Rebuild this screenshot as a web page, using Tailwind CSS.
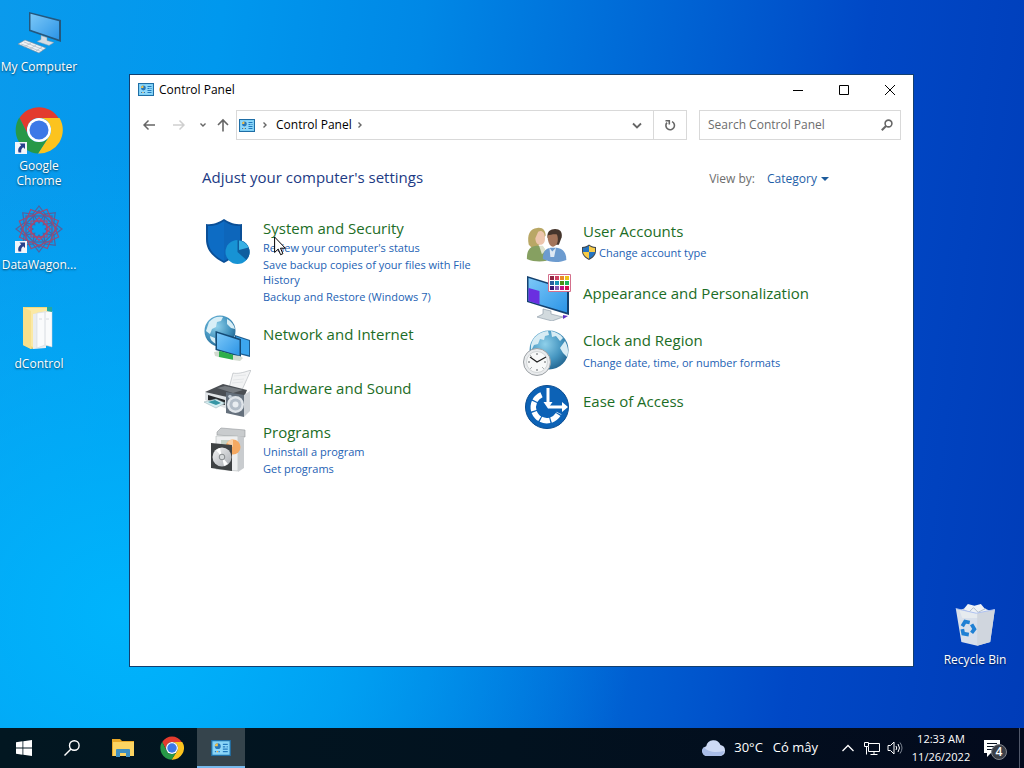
<!DOCTYPE html>
<html lang="en">
<head>
    <meta charset="UTF-8">
    <meta name="viewport" content="width=device-width, initial-scale=1.0">
    <title>Control Panel</title>
    <script src="https://cdn.jsdelivr.net/npm/@tailwindcss/browser@4"></script>
</head>
<body class="min-h-screen flex flex-col overflow-hidden font-['Open_Sans','Noto_Sans',sans-serif] text-xs bg-[radial-gradient(ellipse_50%_60%_at_12%_80%,#00b4fc_0%,#00b4fc00_100%),linear-gradient(97deg,#0a9aec_0%,#0098ee_20%,#0088e6_38%,#0068d6_58%,#0048c6_78%,#003cb8_100%)]">

    <!-- Shared icons -->
    <svg class="absolute size-0" aria-hidden="true">
        <defs>
            <linearGradient id="screenBlue" x1="0" y1="0" x2="1" y2="1">
                <stop offset="0" stop-color="#7cc8f8" />
                <stop offset="1" stop-color="#2b94e6" />
            </linearGradient>
            <radialGradient id="globeBlue" cx=".4" cy=".35" r=".7">
                <stop offset="0" stop-color="#8fd0ea" />
                <stop offset=".6" stop-color="#4595c0" />
                <stop offset="1" stop-color="#22648f" />
            </radialGradient>
            <linearGradient id="metal" x1="0" y1="0" x2="1" y2="1">
                <stop offset="0" stop-color="#f4f4f4" />
                <stop offset="1" stop-color="#a9adb3" />
            </linearGradient>
        </defs>
        <symbol id="panel" viewBox="0 0 16 13">
            <rect x=".5" y=".5" width="15" height="12" fill="#7fd0f5" stroke="#1f6ea6" />
            <rect x="2" y="2" width="12" height="9" fill="#8fd8fa" />
            <circle cx="5.4" cy="5" r="2.4" fill="#2877b8" />
            <path d="M5.4 5V2.6A2.4 2.4 0 0 0 3 5z" fill="#f2c14a" />
            <path d="M9.500 3.500h4M9.500 5.500h2M12.500 5.500h1M9.500 7.500h4M9.500 9.500h4M3 9.500h1M6 9.500h1" stroke="#2079bd" />
            <path d="M4.500 9.500h1" stroke="#f2a23a" />
        </symbol>
        <symbol id="chrome" viewBox="0 0 48 48">
            <path d="M24 12H43.500A23 23 0 0 0 4.500 12L13.600 30A12 12 0 0 1 24 12z" fill="#e33b2e" />
            <path d="M24 12H44.500A23.500 23.500 0 0 1 23 47.500L34.400 30A12 12 0 0 0 24 12z" fill="#fcc31e" />
            <path d="M4.300 11.500A23.500 23.500 0 0 0 23 47.500L34.400 30A12 12 0 0 1 13.600 30z" fill="#279847" />
            <circle cx="24" cy="24" r="12" fill="#fff" />
            <circle cx="24" cy="24" r="9.500" fill="#3b78e7" />
        </symbol>
        <symbol id="shortcut" viewBox="0 0 12 12">
            <path d="M0 0h12v12H0z" fill="#f2f5fa" />
            <path d="M4.500 1.500H10V7L8.200 5.300C6.500 6.500 6 8 6.200 10.500H3.500C2.500 7.500 3.800 5 6.200 3.300z" fill="#27418c" />
        </symbol>
        <symbol id="chevron" viewBox="0 0 8 8">
            <path d="M2.500 1.500L5 4 2.500 6.500" fill="none" stroke="#666" stroke-width="1.400" />
        </symbol>
    </svg>

    <main class="flex-1 flex">

        <!-- Desktop icons, left -->
        <ul class="w-[129px] shrink-0 pt-[7px] text-white text-center leading-[15px] [text-shadow:0_1px_2px_rgb(0_0_0/0.6)]">
            <li class="w-[78px] h-[99px]">
                <svg class="mx-auto size-12" viewBox="0 0 48 48">
                    <path d="M14 5l32 8v22L14 24z" fill="#24577d" />
                    <path d="M15.500 6.800L44 14.200v18.300L15.500 22.700z" fill="url(#screenBlue)" />
                    <path d="M26 28.500l6 2v3l7 2-5 3-12-4 4-2z" fill="#d5dde4" stroke="#8298a8" stroke-width=".5" />
                    <path d="M3 37l7-4 21 8-7 5z" fill="#eef2f5" stroke="#74899a" stroke-width=".6" />
                    <path d="M6 37l20 7.500M9 35l19 7.500M9 40l7-4M15 42l6-4M21 44l6-4" stroke="#a9b8c4" stroke-width=".7" />
                </svg>
                <span class="block mt-1 whitespace-nowrap">My Computer</span>
            </li>
            <li class="w-[78px] h-[99px]">
                <div class="relative mx-auto size-12">
                    <svg class="size-12"><use href="#chrome" /></svg>
                    <svg class="absolute left-0 bottom-0 size-3"><use href="#shortcut" /></svg>
                </div>
                <span class="block mt-1">Google<br>Chrome</span>
            </li>
            <li class="w-[78px] h-[99px]">
                <div class="relative mx-auto size-12">
                    <svg class="size-12" viewBox="0 0 48 48" fill="none" stroke="#55609c" stroke-width="1.200">
                        <g id="petals">
                            <path d="M24 1l6 8-6 9-6-9zM24 47l6-8-6-9-6 9zM1 24l8-6 9 6-9 6zM47 24l-8-6-9 6 9 6z" />
                            <rect x="11" y="11" width="26" height="26" />
                            <rect x="16" y="16" width="16" height="16" stroke="#b5466e" />
                        </g>
                        <use href="#petals" transform="rotate(45 24 24)" />
                        <g stroke="#a04a72">
                            <rect x="9" y="9" width="30" height="30" transform="rotate(22 24 24)" />
                            <rect x="9" y="9" width="30" height="30" transform="rotate(67 24 24)" />
                        </g>
                        <circle cx="24" cy="24" r="8" stroke="#a04a72" />
                    </svg>
                    <svg class="absolute left-0 bottom-0 size-3"><use href="#shortcut" /></svg>
                </div>
                <span class="block mt-1 whitespace-nowrap">DataWagon...</span>
            </li>
            <li class="w-[78px] h-[99px]">
                <svg class="mx-auto size-12" viewBox="0 0 48 48">
                    <path d="M8 3l27 0v38l-19 4L8 41z" fill="#f3d877" />
                    <path d="M10 4h23v4l-15 2v33l-8-3z" fill="#fbe9a4" />
                    <path d="M18 10l13-3v37l-13 1z" fill="#e9edf0" />
                    <path d="M22 9l15-2v36l-7-2-8 3z" fill="#fafbfc" stroke="#ccd3d8" stroke-width=".5" />
                    <path d="M30 8v33M24 15h3M31 15h3" stroke="#cfd5da" stroke-width=".8" />
                    <path d="M32 3h5v5l-5-1z" fill="#25a8a0" />
                    <path d="M8 3l8 4v38l-8-4z" fill="#f8df8b" />
                </svg>
                <span class="block mt-1">dControl</span>
            </li>
        </ul>

        <!-- Control Panel window -->
        <section class="flex-1 min-w-0 mt-[74px] mb-[61px] bg-white border border-[#123f70] text-black">
            <header class="h-[29px] flex items-center">
                <svg class="ml-2 w-4 h-[13px]"><use href="#panel" /></svg>
                <h1 class="ml-[5px] flex-1">Control Panel</h1>
                <button class="w-[46px] h-7 grid place-items-center" aria-label="Minimize">
                    <svg class="size-3" viewBox="0 0 12 12" stroke="#000"><path d="M1 6.500h10" /></svg>
                </button>
                <button class="w-[46px] h-7 grid place-items-center" aria-label="Maximize">
                    <svg class="size-3" viewBox="0 0 12 12" stroke="#000" fill="none"><path d="M1.500 1.500h9v9h-9z" /></svg>
                </button>
                <button class="w-[46px] h-7 grid place-items-center" aria-label="Close">
                    <svg class="size-3" viewBox="0 0 12 12" stroke="#000"><path d="M1 1l10 10M11 1L1 11" /></svg>
                </button>
            </header>

            <!-- Navigation -->
            <nav class="h-[42px] flex items-center pr-3">
                <div class="w-[106px] shrink-0 flex items-center pl-[13px]">
                    <button aria-label="Back">
                        <svg class="size-3" viewBox="0 0 12 12" fill="none" stroke="#666" stroke-width="1.500"><path d="M12 6H1M5.500 1.500L1 6l4.500 4.500" /></svg>
                    </button>
                    <button class="ml-[18px]" aria-label="Forward">
                        <svg class="size-3" viewBox="0 0 12 12" fill="none" stroke="#cfcfcf" stroke-width="1.500"><path d="M0 6h11M6.500 1.500L11 6l-4.500 4.500" /></svg>
                    </button>
                    <button class="ml-3.5" aria-label="Recent locations">
                        <svg class="size-2 rotate-90"><use href="#chevron" /></svg>
                    </button>
                    <button class="ml-2.5" aria-label="Up">
                        <svg class="w-3 h-[14px]" viewBox="0 0 12 14" fill="none" stroke="#666" stroke-width="1.600"><path d="M6 13.500V2M1 7l5-5 5 5" /></svg>
                    </button>
                </div>
                <div class="flex-1 h-[30px] flex items-center border border-[#d9d9d9]">
                    <svg class="ml-0.5 w-4 h-[13px]"><use href="#panel" /></svg>
                    <svg class="ml-1.5 size-2"><use href="#chevron" /></svg>
                    <a href="#" class="ml-[7px]">Control Panel</a>
                    <svg class="ml-1 size-2"><use href="#chevron" /></svg>
                    <button class="ml-auto w-8 h-full grid place-items-center" aria-label="Previous locations">
                        <svg class="size-3" viewBox="0 0 12 12" fill="none" stroke="#666" stroke-width="1.800"><path d="M2 4.500l4 4 4-4" /></svg>
                    </button>
                    <button class="w-[33px] h-full grid place-items-center border-l border-[#d9d9d9]" aria-label="Refresh">
                        <svg class="size-3" viewBox="0 0 12 12" fill="none" stroke="#666" stroke-width="1.600"><path d="M8 2.600A4.300 4.300 0 1 1 3 3.600M1.500 1.800H5.300V5.500" /></svg>
                    </button>
                </div>
                <label class="ml-3 w-[202px] h-[30px] flex items-center border border-[#d9d9d9] pl-2 pr-[7px]">
                    <input type="text" aria-label="Search Control Panel" placeholder="Search Control Panel" class="flex-1 min-w-0 outline-none placeholder:text-[#6d6d6d]">
                    <svg class="size-3" viewBox="0 0 12 12" fill="none" stroke="#666" stroke-width="1.600"><circle cx="7.500" cy="4.500" r="3.400" /><path d="M5 7L.8 11.200" stroke-width="2" /></svg>
                </label>
            </nav>

            <div class="pl-[72px] pr-[84px] pt-[19px]">
                <div class="flex items-baseline">
                    <h2 class="flex-1 text-[15px] leading-6 text-[#1c3a84]">Adjust your computer's settings</h2>
                    <label for="view" class="text-[#6d6d6d]">View by:</label>
                    <div class="relative ml-3 flex items-center text-[#1f5fa8]">
                        <select id="view" class="appearance-none w-[62px] outline-none">
                            <option>Category</option>
                        </select>
                        <svg class="absolute right-0 w-2 h-1 pointer-events-none" viewBox="0 0 8 4"><path d="M0 0h8L4 4z" fill="#1d5c9c" /></svg>
                    </div>
                </div>

                <div class="flex ml-px mt-[29px] text-[11px] leading-[15px] text-[#2462b4]">

                    <!-- Left column -->
                    <div class="w-[320px] shrink-0">
                        <div class="relative flex gap-3">
                            <svg class="size-12 shrink-0" viewBox="0 0 48 48">
                                <path d="M3 6C11 7 16 4 21 1c5 3 10 6 18 5v15c0 12-8 19-18 24C11 40 3 33 3 21z" fill="#0a4f97" />
                                <path d="M5 8c7 0 12-2 16-5v40C11 38 5 31 5 21z" fill="#0d6cc4" />
                                <path d="M21 3c4 3 9 5 16 5v13c0 11-7 17-16 22z" fill="#0d66bb" />
                                <circle cx="34.500" cy="34" r="12" fill="#1793d4" />
                                <path d="M34.500 34V22a12 12 0 0 1 9 20z" fill="#0f5e9f" />
                                <path d="M36 32V22.500a12 12 0 0 1 9.500 7z" fill="#37b0e4" />
                            </svg>
                            <div class="w-[220px]">
                                <a href="#" class="block text-[15px] leading-5 text-[#1c6d26]">System and Security</a>
                                <a href="#" class="block mt-0.5">Review your computer's status</a>
                                <a href="#" class="block mt-0.5">Save backup copies of your files with File History</a>
                                <a href="#" class="block mt-0.5">Backup and Restore (Windows 7)</a>
                            </div>
                            <!-- Mouse pointer -->
                            <svg class="absolute left-[71px] top-[18px] w-3 h-[20px]" viewBox="0 0 12 20"><path d="M.6 1v15.500l3.600-3.400 2.400 5.600 2.300-1-2.400-5.500h4.800z" fill="#fff" stroke="#000" /></svg>
                        </div>
                        <div class="flex gap-3 mt-2.5">
                            <svg class="size-12 shrink-0" viewBox="0 0 48 48">
                                <circle cx="17" cy="17" r="15.500" fill="url(#globeBlue)" />
                                <path d="M6 8c4-5 9-6 14-5l-2 4-4 1-1 5-4 2-2 5-4-3zM24 5c4 2 7 6 8 10l-4-1-4-4zM7 22l5 2 1 6c-4-2-6-5-6-8z" fill="#d8eef6" />
                                <path d="M32 21l15 5v17l-15-4z" fill="#1d5c8e" />
                                <path d="M33 22.500l13 4.300v14.500l-13-3z" fill="#3ca6ee" />
                                <path d="M12.500 17L38 25v18.500L12.500 36z" fill="#144a75" />
                                <path d="M14 19l22.500 7.200v15.300L14 35z" fill="url(#screenBlue)" />
                                <path d="M13 39l4-2 14 4v5l-15-3z" fill="#2fae4b" />
                                <path d="M11 38l5-1v6l-4-1zM30 41l7 1 3 2-3 3-7-1z" fill="#d2dbd0" />
                            </svg>
                            <a href="#" class="mt-2.5 text-[15px] leading-5 text-[#1c6d26]">Network and Internet</a>
                        </div>
                        <div class="flex gap-3 mt-2">
                            <svg class="size-12 shrink-0" viewBox="0 0 48 48">
                                <path d="M26 18l4-15c4 1 9 0 18-3l-9 20z" fill="#f2f3f4" stroke="#aeb3b8" stroke-width=".6" />
                                <path d="M31 6l12-1M30 10l11-1M29 13l11-1" stroke="#dde0e3" stroke-width=".7" />
                                <path d="M2 22l18-8 24 6-4 10-22 4z" fill="#4a4e53" />
                                <path d="M14 18l8-2 18 4-10 3z" fill="#767b80" />
                                <path d="M2 22l22 5v12L2 30z" fill="#dfe3e6" />
                                <path d="M5 25l17 5v5L5 30z" fill="#26292c" />
                                <path d="M1 32l12-3 9 4-9 5z" fill="#d6eef2" stroke="#91a9ae" stroke-width=".5" />
                                <path d="M5 32l7-2 6 3-5 2z" fill="#3696a5" />
                                <path d="M23 22l18 3v22l-18-4z" fill="#65707c" />
                                <path d="M41 25l6-4v20l-6 6z" fill="#cfd3d7" />
                                <circle cx="32.500" cy="34.500" r="8.500" fill="#dfe4e9" />
                                <circle cx="32.500" cy="34.500" r="6" fill="#b3bdc8" />
                                <circle cx="32.500" cy="34.500" r="3" fill="#e9edf1" />
                                <circle cx="27" cy="26.500" r="1.800" fill="#c2ccd6" />
                            </svg>
                            <a href="#" class="mt-2 text-[15px] leading-5 text-[#1c6d26]">Hardware and Sound</a>
                        </div>
                        <div class="flex gap-3 mt-1">
                            <svg class="size-12 mt-1 shrink-0" viewBox="0 0 48 48">
                                <path d="M14 6l4-4 24 2v7l-28-2z" fill="#c9ccce" stroke="#95999c" stroke-width=".6" />
                                <path d="M13 10h22v35l-22-2z" fill="#eeeff0" stroke="#b4b8bb" stroke-width=".6" />
                                <path d="M35 10l6 1v31l-6 4z" fill="#c9cccf" />
                                <path d="M18 14h9v8h-9z" fill="#c3d0c5" />
                                <circle cx="30" cy="21" r="7.500" fill="#f5a962" />
                                <path d="M30 21V13a8 8 0 0 0-6 4z" fill="#f9cfa4" />
                                <path d="M8 17l21 2v26L8 42z" fill="#3f4244" />
                                <circle cx="19" cy="31" r="9.500" fill="url(#metal)" />
                                <path d="M19 31l-6-7 4-2zM19 31l6 7-4 2z" fill="#fff" />
                                <circle cx="19" cy="31" r="2.800" fill="#d6d9db" stroke="#868a8d" />
                            </svg>
                            <div>
                                <a href="#" class="block text-[15px] leading-5 text-[#1c6d26]">Programs</a>
                                <a href="#" class="block mt-0.5">Uninstall a program</a>
                                <a href="#" class="block mt-0.5">Get programs</a>
                            </div>
                        </div>
                    </div>

                    <!-- Right column -->
                    <div class="flex-1 min-w-0 pt-[3px]">
                        <div class="flex gap-3">
                            <svg class="size-12 shrink-0" viewBox="0 0 48 48">
                                <g transform="translate(2 6) scale(.94)">
                                    <path d="M4 19C2 8 5 2 13 1c6-1 9 3 9 8l-3 4-6 9-5 1z" fill="#b9a765" />
                                    <path d="M14 5c4-2 7 1 7 5 1 5-1 9-5 9-3 0-5-3-5-7z" fill="#edc5ad" />
                                    <path d="M2 34c0-8 2-13 10-14 6-1 10 3 11 8v8c-7 1-14 1-21-2z" fill="#86a061" />
                                    <path d="M15 20h4l3 5-4 4z" fill="#dfe3cf" />
                                    <path d="M24 11c-1-6 3-9 8-9s8 3 7 9l-3 8h-8z" fill="#45352c" />
                                    <path d="M24 9c3-1 8-2 10-1 2 5 1 12-4 13-4 0-6-6-6-12z" fill="#a3745a" />
                                    <path d="M19 34c0-7 2-11 8-12h7c7 1 10 6 10 13-7 3-17 3-25-1z" fill="#6c9bcf" />
                                    <path d="M26 22l3 4 4-4-2 10h-4z" fill="#dfe9f4" />
                                </g>
                            </svg>
                            <div>
                                <a href="#" class="block text-[15px] leading-5 text-[#1c6d26]">User Accounts</a>
                                <a href="#" class="flex items-center mt-[3px]">
                                    <svg class="-ml-0.5 mr-0.5 size-4" viewBox="0 0 16 16">
                                        <path d="M1 3c3 0 5-1 7-2.500C10 2 12 3 15 3v4c0 4-3 7-7 9-4-2-7-5-7-9z" fill="#41484f" />
                                        <path d="M8 1.800V8H2V4c2.500 0 4.500-1 6-2.200zM8 8h6c-.5 3-3 5.300-6 6.800z" fill="#2574c0" />
                                        <path d="M8 1.800V8h6V4c-2.500 0-4.500-1-6-2.200zM8 8H2c.5 3 3 5.300 6 6.800z" fill="#f8cc47" />
                                    </svg>
                                    Change account type
                                </a>
                            </div>
                        </div>
                        <div class="flex gap-3 mt-1">
                            <svg class="size-12 shrink-0" viewBox="0 0 48 48">
                                <path d="M4 3l42 13v26L4 29z" fill="#14416f" />
                                <path d="M5.500 5L44 17v22.500L5.500 28z" fill="url(#screenBlue)" />
                                <path d="M5.500 15l11 3v13.500l-11-3.500z" fill="#6a2fe0" />
                                <path d="M20 36l8 2v3l12 3-11 4-15-4 6-3z" fill="#d2dade" stroke="#8796a2" stroke-width=".6" />
                                <path d="M40 42l5 1-5 3z" fill="#6231c5" />
                                <path d="M25.500 1.500h22v17h-22z" fill="#fff" stroke="#d4708c" />
                                <path d="M27 3h4v4h-4z" fill="#8e2541" /><path d="M32 3h4v4h-4z" fill="#cf4161" /><path d="M37 3h4v4h-4z" fill="#e98a28" /><path d="M42 3h4v4h-4z" fill="#ecc018" />
                                <path d="M27 8h4v4h-4z" fill="#27609c" /><path d="M32 8h4v4h-4z" fill="#1794b4" /><path d="M37 8h4v4h-4z" fill="#4a8c14" /><path d="M42 8h4v4h-4z" fill="#17b25c" />
                                <path d="M27 13h4v4h-4z" fill="#3b1c76" /><path d="M32 13h4v4h-4z" fill="#8759b3" /><path d="M37 13h4v4h-4z" fill="#bd1285" /><path d="M42 13h4v4h-4z" fill="#d1104f" />
                            </svg>
                            <a href="#" class="mt-2.5 text-[15px] leading-5 text-[#1c6d26]">Appearance and Personalization</a>
                        </div>
                        <div class="flex gap-3 mt-2">
                            <svg class="size-12 shrink-0" viewBox="0 0 48 48">
                                <circle cx="26" cy="21" r="19.500" fill="url(#globeBlue)" />
                                <path d="M8 16C10 8 16 3 25 2l1 4-4 1-1 4-4-1-2 5-4 1-3 6zM28 2c5 1 9 3 12 7l-3 3-4-5-4 1zM42 12c3 5 4 11 2 16l-4-4-3-5z" fill="#d8ecf4" />
                                <circle cx="14" cy="33" r="13.500" fill="#e9ebed" stroke="#9a9fa3" />
                                <circle cx="14" cy="33" r="10.500" fill="#f8f9f9" stroke="#c4c8ca" stroke-width=".7" />
                                <path d="M14 24v2M14 40v2M5 33h2M21 33h2M7.500 26.500l1 1M20.500 39.500l-1-1M7.500 39.500l1-1" stroke="#62676a" />
                                <path d="M7 28l7 5 9-5" fill="none" stroke="#222" stroke-width="1.300" />
                            </svg>
                            <div class="pt-px">
                                <a href="#" class="block text-[15px] leading-5 text-[#1c6d26]">Clock and Region</a>
                                <a href="#" class="block mt-[5px]">Change date, time, or number formats</a>
                            </div>
                        </div>
                        <div class="flex gap-3 mt-1.5">
                            <svg class="size-12 shrink-0" viewBox="0 0 48 48">
                                <circle cx="24" cy="24" r="21.500" fill="#0c62b6" stroke="#0a4c90" />
                                <path d="M18.500 11.800A13.500 13.500 0 1 0 36 30" fill="none" stroke="#fff" stroke-width="5.500" stroke-dasharray="9 1.200" />
                                <path d="M25 5v16M25 24h16" stroke="#fff" stroke-width="3" />
                                <path d="M20.500 19h9L25 25.500zM39 19l6 5-6 5z" fill="#fff" />
                            </svg>
                            <a href="#" class="mt-2 text-[15px] leading-5 text-[#1c6d26]">Ease of Access</a>
                        </div>
                    </div>
                </div>
            </div>
        </section>

        <!-- Recycle Bin, right -->
        <ul class="w-[110px] shrink-0 flex flex-col justify-end pb-[61px] text-white text-center leading-[15px] [text-shadow:0_1px_2px_rgb(0_0_0/0.6)]">
            <li class="pl-3">
                <svg class="mx-auto size-12" viewBox="0 0 48 48">
                    <g transform="translate(2 3) scale(.93)">
                        <path d="M7 8l5-2 4-5 7 2 7-2 4 5 7 3-3 7H10z" fill="#eef2f6" />
                        <path d="M11 7l6 3 5-5 5 5 8-4" fill="none" stroke="#aeb9c6" />
                        <path d="M3 6l22 5 20-4-5 35-14 4-17-4z" fill="#e6eaee" fill-opacity=".94" />
                        <path d="M26 11l19-4-5 35-14 4z" fill="#d0d6de" />
                        <path d="M3 6l22 5 20-4" fill="none" stroke="#a9bdf0" />
                        <g fill="none" stroke="#1f80d4" stroke-width="4">
                            <path d="M10 25l3-5 5 1M20 23l3 5-3 4M17 34l-6-1-1-5" />
                        </g>
                    </g>
                </svg>
                <span class="block mt-1">Recycle Bin</span>
            </li>
        </ul>
    </main>

    <!-- Taskbar -->
    <footer class="h-10 shrink-0 flex items-center bg-[linear-gradient(90deg,#021721,#02121f_50%,#030a1d)] text-white">
        <button class="size-12 h-10 grid place-items-center" aria-label="Start">
            <svg class="size-4" viewBox="0 0 16 16" fill="#fff"><path d="M0 2.200l6.500-.9v6.200H0zM7.300 1.200L16 0v7.500H7.300zM0 8.400h6.500v6.300L0 13.800zM7.300 8.400H16V16l-8.700-1.200z" /></svg>
        </button>
        <button class="size-12 h-10 grid place-items-center" aria-label="Search">
            <svg class="size-4" viewBox="0 0 16 16" fill="none" stroke="#fff" stroke-width="1.400"><circle cx="10.300" cy="5.500" r="4.800" /><path d="M7 9L.5 15.500" /></svg>
        </button>
        <button class="size-12 h-10 ml-[3px] grid place-items-center" aria-label="File Explorer">
            <svg class="w-[22px] h-[18px]" viewBox="0 0 22 18">
                <path d="M0 0h8l2 2h12v15H0z" fill="#e9a827" />
                <path d="M1 3h21v14H1z" fill="#fcd462" />
                <path d="M4 18v-7q0-1 1-1h12q1 0 1 1v7h-4v-4H8v4z" fill="#3f8fc0" />
            </svg>
        </button>
        <button class="size-12 h-10 ml-px grid place-items-center" aria-label="Google Chrome">
            <svg class="size-6"><use href="#chrome" /></svg>
        </button>
        <button class="size-12 h-10 ml-px grid place-items-center bg-[#35444c] border-b-2 border-[#76b9ed]" aria-label="Control Panel">
            <svg class="w-5 h-4 mt-0.5"><use href="#panel" /></svg>
        </button>

        <div class="ml-auto flex items-center">
            <button class="flex items-center text-[13px]">
                <svg class="w-6 h-4" viewBox="0 0 24 16"><path d="M5 16a5 5 0 0 1-.8-9.800A7.500 7.500 0 0 1 18.500 5 5.600 5.600 0 0 1 18.500 16z" fill="#cddaf5" /><path d="M5 16a5 5 0 0 1-3-9c3 5 12 6 20 4a5.600 5.600 0 0 1-3.500 5z" fill="#a9bde8" /></svg>
                <span class="ml-2">30°C</span>
                <span class="ml-2.5">Có mây</span>
            </button>
            <button class="ml-6" aria-label="Show hidden icons">
                <svg class="w-3 h-4" viewBox="0 0 12 16" fill="none" stroke="#fff" stroke-width="1.300"><path d="M.5 11L6 5.500 11.500 11" /></svg>
            </button>
            <button class="ml-2.5" aria-label="Network">
                <svg class="size-4" viewBox="0 0 16 16" fill="none" stroke="#fff"><path d="M5 3.500h10.500v8H4.500V7M10 11.500v3M6.500 14.500h7M.5 2.500h4v4h-4zM2.500 6.500v8" /></svg>
            </button>
            <button class="ml-[7px]" aria-label="Volume">
                <svg class="size-4" viewBox="0 0 16 16" fill="none" stroke="#fff"><path d="M1 5.500h2.500L7 2v12L3.500 10.500H1zM9 6q1.500 2 0 4M11 4q3 4 0 8" /><path d="M13 2.500q4 5.500 0 11" stroke="#7d8592" /></svg>
            </button>
            <time class="ml-2 w-[60px] text-[11px] leading-[18px] text-center" datetime="2022-11-26T00:33">12:33 AM<br>11/26/2022</time>
            <button class="relative ml-3 size-6" aria-label="4 notifications">
                <svg class="size-6" viewBox="0 0 24 24"><path d="M1 4h16v13h-9l-4 4v-4H1z" fill="#fff" /><path d="M4 7.500h10M4 10.500h10M4 13.500h6" stroke="#06101f" /></svg>
                <span class="absolute left-2 top-2 size-4 rounded-full bg-[#3b3f48] border border-[#80848c] text-xs leading-[14px] font-semibold">4</span>
            </button>
            <span class="ml-3 mr-1 w-px h-10 bg-[#51586a]"></span>
        </div>
    </footer>
</body>
</html>
